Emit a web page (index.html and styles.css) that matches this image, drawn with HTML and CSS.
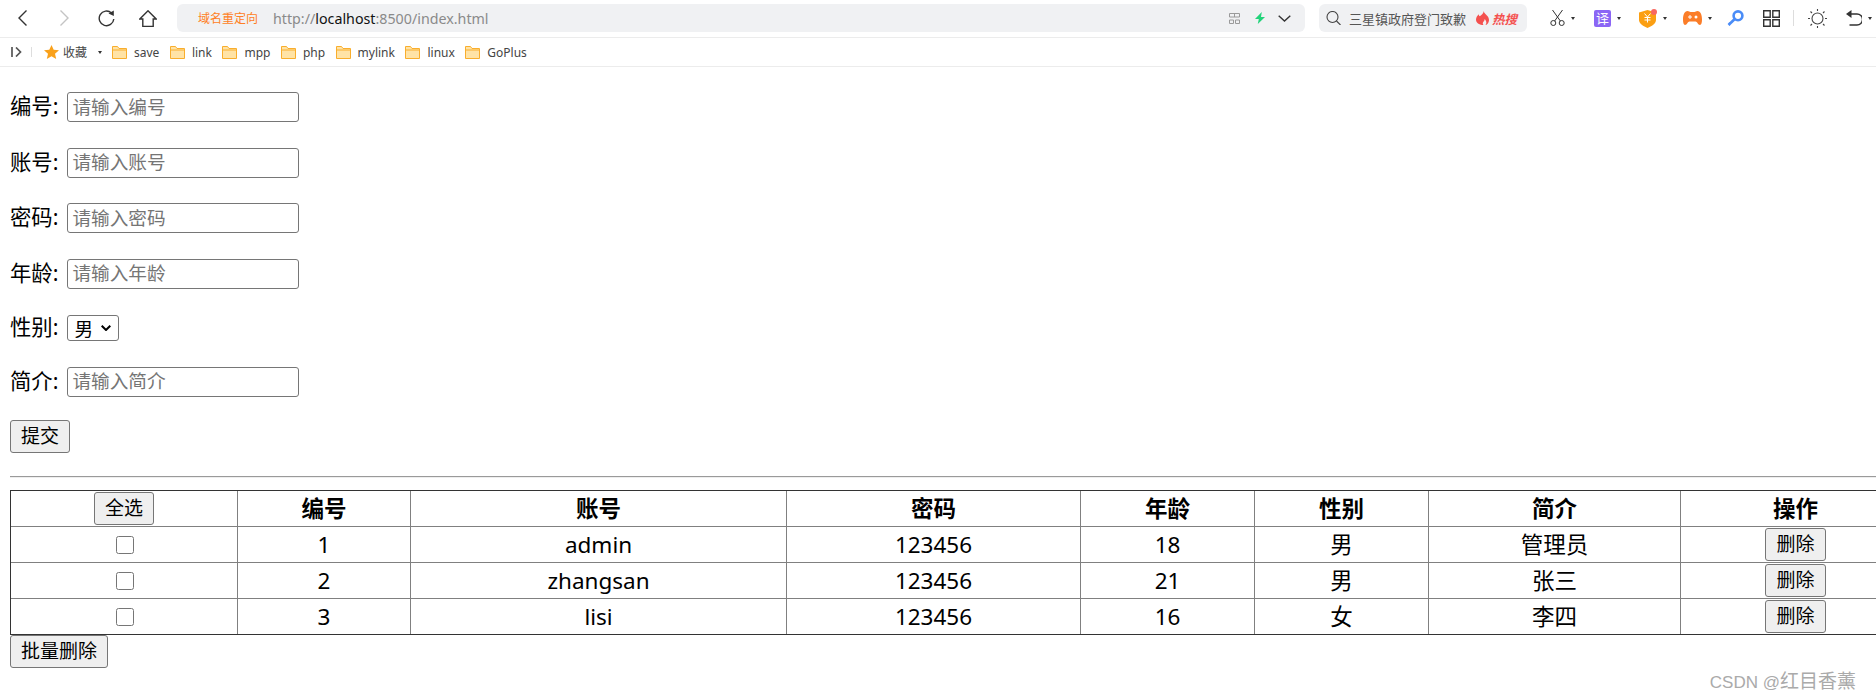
FILE: index.html
```html
<!DOCTYPE html>
<html lang="zh-CN">
  <head>
    <meta charset="utf-8">
    <title>index</title>
    <link rel="stylesheet" href="styles.css">
  </head>
  <body>
    <div class="toolbar">
      <div class="nav-btns">
        <span class="nav-btn"><svg class="back" viewBox="0 0 9 16"><path d="M8.500.5 1 8l7.500 7.500" class="line"/></svg></span>
        <span class="nav-btn"><svg class="back" viewBox="0 0 9 16"><path d="M.5.5 8 8 .5 15.500" class="line off"/></svg></span>
        <span class="nav-btn"><svg class="reload" viewBox="0 0 17 17"><path d="M13.500 3A7.300 7.300 0 1 0 15.800 9" class="line"/><path d="M10.500 3.500 15.800.5v5.500z" class="solid"/></svg></span>
        <span class="nav-btn"><svg class="home" viewBox="0 0 18 17"><path d="M.8 9 9 .8 17.200 9h-3v7.500H3.800V9z" class="line"/></svg></span>
      </div>
      <div class="address">
        <span class="redirect-tag">域名重定向</span>
        <span class="url">http://<b>localhost</b>:8500/index.html</span>
        <span class="address-icons">
          <svg class="qr" viewBox="0 0 11 11"><path d="M.5.500h10v3.500H.5zM.5 7h4v3.500h-4zM6.500 7h4v3.500h-4zM5.500.5V4" class="qr-line"/></svg>
          <svg class="bolt" viewBox="0 0 10 12"><path d="M6.800 0 0 7h3.800L2.800 12 10 5H6z"/></svg>
          <svg class="chevron" viewBox="0 0 13 7"><path d="m.7.7 5.800 5.300L12.300.7" class="line"/></svg>
        </span>
      </div>
      <div class="search">
        <svg class="search-icon" viewBox="0 0 15 14"><circle cx="6.500" cy="6" r="5.500"/><path d="m10.500 10 4 4"/></svg>
        <span class="search-text">三星镇政府登门致歉</span>
        <svg class="flame" viewBox="0 0 13 14"><path d="M7.500 0c.5 3 5.500 4.500 5.500 9 0 3-2.500 5-3.500 5 1-1.500 1.500-3-.8-6-.4 2.500-1.200 2-1.700 3.500-.5 1.200 0 2 .5 2.500C4 14 0 12.500 0 8.500 0 6 1.500 4.800 2.500 3.200c.3 1 .7 1.600 1.200 2C5.500 4 7.800 2.500 7.500 0z"/></svg>
        <span class="hot">热搜</span>
      </div>
      <div class="tools">
        <div class="tool t44">
          <svg class="scissors" viewBox="0 0 15 16"><path d="M2.500 0 10.500 11.200M12.500 0 4.500 11.200"/><circle cx="3.300" cy="13" r="2.500"/><circle cx="11.700" cy="13" r="2.500"/></svg>
          <i class="caret"></i>
        </div>
        <div class="tool t45">
          <span class="translate">译</span>
          <i class="caret"></i>
        </div>
        <div class="tool t44">
          <svg class="shield" viewBox="0 0 18 19"><path d="M0 3.500 8.500 1 17 3.500v7.500c0 3.500-4.500 6.500-8.500 8C4.500 17.500 0 14.500 0 11z" fill="#fb9f12"/><path d="M5.500 4.500 8.500 8l3-3.500M5.500 8.500h6M5.500 11h6M8.500 8v5.500" class="yen"/><circle cx="15" cy="3" r="3" fill="#f8675f"/></svg>
          <i class="caret"></i>
        </div>
        <div class="tool t44">
          <svg class="game" viewBox="0 0 19 14"><path d="M4.500 0c1.500 0 2 1 3 1h4c1 0 1.500-1 3-1C17.500 0 19 4 19 8.500c0 3-.7 5.500-2 5.500-2 0-2.800-3.500-4.500-3.500h-6C4.800 10.500 4 14 2 14 .7 14 0 11.500 0 8.500 0 4 1.500 0 4.500 0z" fill="#fb7d28"/><path d="M5 6h4M7 4v4" class="yen"/><circle cx="13" cy="6" r="1.500" fill="#fff"/></svg>
          <i class="caret"></i>
        </div>
        <div class="tool t36">
          <svg class="key" viewBox="0 0 17 16"><circle cx="11" cy="5.800" r="4.400"/><path d="M7.500 9.200 1.500 15M1.500 13l2 2"/></svg>
        </div>
        <div class="tool t30">
          <svg class="grid-icon" viewBox="0 0 17 17"><path d="M.7.700h6.500v6.500H.7zM9.800.700h6.500v6.500H9.800zM.7 9.800h6.500v6.500H.7zM9.800 9.800h6.500v6.500H9.800z" class="line"/></svg>
        </div>
        <div class="tool t15"><i class="divider"></i></div>
        <div class="tool t38">
          <svg class="sun" viewBox="0 0 19 19"><circle cx="9.500" cy="9.500" r="5.500"/><path d="M9.500 0v2M9.500 17v2M2.500 2.500 4 4M16.500 2.500 15 4M2.500 16.500 4 15M16.500 16.500 15 15M0 9.500h2M17 9.500h2"/></svg>
        </div>
        <div class="tool">
          <svg class="undo" viewBox="0 0 16 16"><path d="M3 4h8a5.500 5.500 0 0 1 0 11H3.500" class="line"/><path d="M5.500 0v8L0 4z" class="solid"/></svg>
          <i class="caret"></i>
        </div>
      </div>
    </div>

    <div class="bookmarks">
      <svg class="side-icon" viewBox="0 0 11 10"><path d="M1 0v10" class="side-line"/><path d="m5 .5 4.500 4.500L5 9.500" class="side-line"/></svg>
      <i class="bm-sep"></i>
      <svg class="star" viewBox="0 0 15 14"><path d="m7.500 0 2.200 4.800 5.300.5-4 3.500 1.200 5.200-4.700-2.800L2.800 14 4 8.800 0 5.300l5.300-.5z"/></svg>
      <span class="fav">收藏</span>
      <i class="caret fav-caret"></i>
      <div class="bm-list">
        <a class="bm"><svg class="folder" viewBox="0 0 15 13"><path d="M.5 12.500V.5h5l1.500 2h7.500v10zM.5 4h14"/></svg>save</a>
        <a class="bm"><svg class="folder" viewBox="0 0 15 13"><path d="M.5 12.500V.5h5l1.500 2h7.500v10zM.5 4h14"/></svg>link</a>
        <a class="bm"><svg class="folder" viewBox="0 0 15 13"><path d="M.5 12.500V.5h5l1.500 2h7.500v10zM.5 4h14"/></svg>mpp</a>
        <a class="bm"><svg class="folder" viewBox="0 0 15 13"><path d="M.5 12.500V.5h5l1.500 2h7.500v10zM.5 4h14"/></svg>php</a>
        <a class="bm"><svg class="folder" viewBox="0 0 15 13"><path d="M.5 12.500V.5h5l1.500 2h7.500v10zM.5 4h14"/></svg>mylink</a>
        <a class="bm"><svg class="folder" viewBox="0 0 15 13"><path d="M.5 12.500V.5h5l1.500 2h7.500v10zM.5 4h14"/></svg>linux</a>
        <a class="bm"><svg class="folder" viewBox="0 0 15 13"><path d="M.5 12.500V.5h5l1.500 2h7.500v10zM.5 4h14"/></svg>GoPlus</a>
      </div>
    </div>

    <div class="page">
      <form class="user-form">
        <p class="row"><label>编号:</label><input type="text" placeholder="请输入编号"></p>
        <p class="row"><label>账号:</label><input type="text" placeholder="请输入账号"></p>
        <p class="row"><label>密码:</label><input type="text" placeholder="请输入密码"></p>
        <p class="row"><label>年龄:</label><input type="text" placeholder="请输入年龄"></p>
        <p class="row row-select"><label>性别:</label><select><option>男</option><option>女</option></select></p>
        <p class="row"><label>简介:</label><input type="text" placeholder="请输入简介"></p>
        <button type="button" class="btn btn-block">提交</button>
      </form>
      <hr class="rule">
      <table class="users">
        <colgroup>
          <col class="c1"><col class="c2"><col class="c3"><col class="c4"><col class="c5"><col class="c6"><col class="c7"><col class="c8">
        </colgroup>
        <tr>
          <th><button type="button" class="btn">全选</button></th>
          <th>编号</th><th>账号</th><th>密码</th><th>年龄</th><th>性别</th><th>简介</th><th>操作</th>
        </tr>
        <tr>
          <td><input type="checkbox"></td>
          <td>1</td><td>admin</td><td>123456</td><td>18</td><td>男</td><td>管理员</td>
          <td><button type="button" class="btn">删除</button></td>
        </tr>
        <tr>
          <td><input type="checkbox"></td>
          <td>2</td><td>zhangsan</td><td>123456</td><td>21</td><td>男</td><td>张三</td>
          <td><button type="button" class="btn">删除</button></td>
        </tr>
        <tr>
          <td><input type="checkbox"></td>
          <td>3</td><td>lisi</td><td>123456</td><td>16</td><td>女</td><td>李四</td>
          <td><button type="button" class="btn">删除</button></td>
        </tr>
      </table>
      <button type="button" class="btn btn-block">批量删除</button>
    </div>

    <div class="watermark"><span class="wm-latin">CSDN @</span>红目香薰</div>
  </body>
</html>
```

FILE: styles.css
```css
html {
  overflow: hidden;
}
body {
  margin: 0;
  height: 698px;
  overflow: hidden;
  position: relative;
  background-color: #fff;
  color: #000;
  font-family: "Noto Sans", "Noto Sans CJK SC", sans-serif;
}
svg {
  display: block;
  flex: none;
}
.line {
  fill: none;
  stroke: #333;
  stroke-width: 1.4;
}
.line.off {
  stroke: #c4c4c4;
}
.solid {
  fill: #333;
}

/* browser bar */
.toolbar {
  height: 38px;
  box-sizing: border-box;
  border-bottom: 1px solid #ececec;
  display: flex;
  align-items: flex-start;
  padding-top: 4px;
}
.nav-btns {
  width: 177px;
  height: 28px;
  padding-left: 1px;
  box-sizing: border-box;
  display: flex;
  align-items: center;
}
.nav-btn {
  width: 42px;
  display: flex;
  justify-content: center;
}
.back {
  width: 9px;
  height: 16px;
}
.reload {
  width: 17px;
  height: 17px;
}
.home {
  width: 18px;
  height: 17px;
}
.address {
  width: 1128px;
  height: 28px;
  background-color: #f0f1f3;
  border-radius: 6px;
  display: flex;
  align-items: center;
  box-sizing: border-box;
  padding-left: 21px;
}
.redirect-tag {
  width: 75px;
  font-size: 12px;
  color: #ff7f24;
}
.url {
  font-size: 14.25px;
  color: #8a8a8a;
}
.url b {
  font-weight: 400;
  color: #111;
}
.address-icons {
  margin-left: auto;
  margin-right: 14px;
  display: flex;
  align-items: center;
}
.qr {
  width: 11px;
  height: 11px;
  margin-right: 15px;
}
.qr-line {
  fill: none;
  stroke: #9a9a9a;
  stroke-width: 1;
}
.bolt {
  width: 10px;
  height: 12px;
  margin-right: 13px;
  fill: #22d37a;
}
.chevron {
  width: 13px;
  height: 7px;
}
.search {
  width: 208px;
  height: 28px;
  margin-left: 14px;
  background-color: #f0f1f3;
  border-radius: 6px;
  display: flex;
  align-items: center;
  box-sizing: border-box;
  padding-left: 7px;
}
.search-icon {
  width: 15px;
  height: 14px;
  fill: none;
  stroke: #444;
  stroke-width: 1.1;
}
.search-text {
  width: 127px;
  margin-left: 8px;
  font-size: 13px;
  color: #555;
  white-space: nowrap;
}
.flame {
  width: 13px;
  height: 14px;
  fill: #f4504e;
}
.hot {
  margin-left: 3px;
  font-size: 12.5px;
  font-weight: 700;
  font-style: italic;
  color: #f4504e;
  white-space: nowrap;
}
.tools {
  margin-left: 23px;
  height: 28px;
  display: flex;
  align-items: center;
}
.tool {
  display: flex;
  align-items: center;
  gap: 6px;
}
.t15 { width: 15px; }
.t30 { width: 30px; }
.t36 { width: 36px; }
.t38 { width: 38px; }
.t44 { width: 44px; }
.t45 { width: 45px; }
.caret {
  display: block;
  width: 0;
  height: 0;
  border-left: 2.5px solid transparent;
  border-right: 2.5px solid transparent;
  border-top: 3px solid #333;
}
.scissors {
  width: 15px;
  height: 16px;
  fill: none;
  stroke: #333;
  stroke-width: 1;
}
.translate {
  width: 17px;
  height: 17px;
  background-color: #8b66f5;
  border-radius: 2px;
  color: #fff;
  font-size: 13px;
  line-height: 17px;
  text-align: center;
}
.shield {
  width: 18px;
  height: 19px;
}
.game {
  width: 19px;
  height: 14px;
}
.yen {
  fill: none;
  stroke: #fff;
  stroke-width: 1;
}
.key {
  width: 17px;
  height: 16px;
  fill: none;
  stroke: #4a8cf7;
  stroke-width: 2.6;
}
.grid-icon {
  width: 17px;
  height: 17px;
}
.divider {
  display: block;
  width: 1px;
  height: 16px;
  background-color: #ddd;
}
.sun {
  width: 19px;
  height: 19px;
  fill: none;
  stroke: #444;
  stroke-width: 1.1;
}
.undo {
  width: 16px;
  height: 16px;
}

/* bookmarks */
.bookmarks {
  height: 29px;
  box-sizing: border-box;
  border-bottom: 1px solid #ececec;
  display: flex;
  align-items: center;
  padding-left: 11px;
  font-size: 12px;
  color: #444;
}
.side-icon {
  width: 11px;
  height: 10px;
}
.side-line {
  fill: none;
  stroke: #555;
  stroke-width: 1.7;
}
.bm-sep {
  display: block;
  width: 1px;
  height: 10px;
  margin-left: 9px;
  background-color: #ddd;
}
.star {
  width: 15px;
  height: 14px;
  margin-left: 12px;
  fill: #f9a11b;
}
.fav {
  margin-left: 4px;
  font-size: 12px;
}
.fav-caret {
  margin-left: 11px;
}
.bm-list {
  margin-left: 10px;
  display: flex;
  gap: 10.5px;
}
.bm {
  display: flex;
  align-items: center;
  gap: 7px;
}
.folder {
  width: 15px;
  height: 13px;
  fill: #ffe3a6;
  stroke: #f9ae2d;
  stroke-width: 1;
}

/* page */
.page {
  padding: 23px 0 0 10px;
  font-size: 22.5px;
}
.row {
  margin: 0 0 21.5px;
  height: 34px;
  display: flex;
  align-items: center;
  gap: 9px;
  line-height: 34px;
  font-size: 21.33px;
}
.row label {
  margin-top: -2px;
}
.row-select {
  height: 31px;
}
.row input {
  width: 232px;
  height: 30px;
  box-sizing: border-box;
  padding: 0 4px 2px;
  border: 1px solid #767676;
  border-radius: 3px;
  font-family: inherit;
  font-size: 18.67px;
}
.row input::placeholder {
  color: #757575;
}
.row select {
  width: 52px;
  height: 26px;
  box-sizing: border-box;
  padding: 0 0 0 6px;
  border: 1px solid #767676;
  border-radius: 3px;
  appearance: none;
  background: #fff url("data:image/svg+xml,%3Csvg xmlns='http://www.w3.org/2000/svg' width='10' height='6'%3E%3Cpath d='M.7.7 5 5 9.300.7' fill='none' stroke='%23000' stroke-width='2'/%3E%3C/svg%3E") no-repeat right 7px center;
  font-family: inherit;
  font-size: 18.67px;
}
.btn {
  display: inline-block;
  height: 33px;
  box-sizing: border-box;
  padding: 0 10px;
  border: 1px solid #767676;
  border-radius: 3px;
  background-color: #efefef;
  color: #000;
  font-family: inherit;
  font-size: 19px;
  line-height: 29px;
  vertical-align: middle;
}
.btn-block {
  display: block;
}
.rule {
  margin: 23px 0 12px;
  height: 2px;
  box-sizing: border-box;
  border: 0;
  border-top: 1px solid #9a9a9a;
  border-bottom: 1px solid #eee;
  width: 1866px;
}
.users {
  table-layout: fixed;
  width: 1900px;
  border-collapse: separate;
  border-spacing: 0;
  border: 1px solid #333;
  border-right: 0;
}
.c1 { width: 227px; }
.c2 { width: 173px; }
.c3 { width: 376px; }
.c4 { width: 294px; }
.c5 { width: 174px; }
.c6 { width: 174px; }
.c7 { width: 252px; }
.c8 { width: 230px; }
.users th,
.users td {
  height: 34px;
  padding: 1px 0 0;
  border-right: 1px solid #808080;
  border-bottom: 1px solid #808080;
  text-align: center;
  line-height: 30px;
}
.users tr:last-child td {
  border-bottom: 0;
}
.users .btn {
  margin-top: -1px;
}
.users input[type="checkbox"] {
  display: block;
  width: 18px;
  height: 18px;
  margin: -1px 0 0 calc(50% - 8px);
}
.watermark {
  position: absolute;
  right: 20px;
  top: 666px;
  font-size: 19px;
  color: #aaa;
  white-space: nowrap;
}
.wm-latin {
  font-family: "Liberation Sans", sans-serif;
  font-size: 17px;
}
```
